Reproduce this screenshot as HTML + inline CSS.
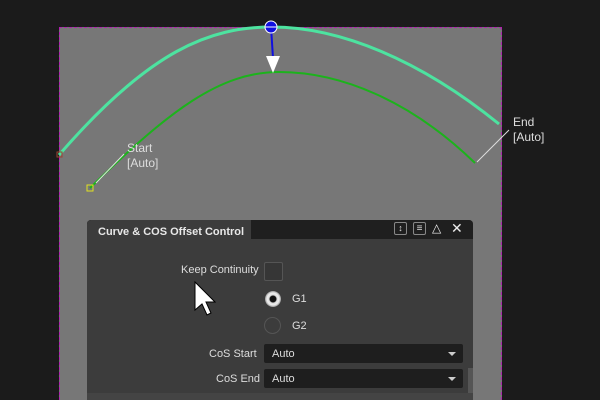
<!DOCTYPE html>
<html><head><style>
body{margin:0;width:600px;height:400px;background:#1b1b1b;position:relative;overflow:hidden;font-family:"Liberation Sans",sans-serif}
.a{position:absolute}
.t{color:#ddd;font-size:11px}
</style></head><body>
<div class="a" style="left:59px;top:27px;width:443px;height:373px;background:#777;border-top:1px dashed #b020b0;border-left:1px dashed #b020b0;border-right:1px dashed #b020b0;box-sizing:border-box"></div>
<svg class="a" style="left:0;top:0" width="600" height="400">
<path d="M59 155 C150 50 210 27 272 27 C340 27 420 60 499 124" stroke="#4de3a0" stroke-width="3" fill="none"/>
<path d="M90 188 C170 110 220 72 279 72 C340 72 410 100 475 163" stroke="#1cb31c" stroke-width="2" fill="none"/>
<rect x="57" y="152" width="5" height="5" fill="none" stroke="#a04030"/>
<rect x="87" y="185" width="6" height="6" fill="none" stroke="#e0e020"/>
<line x1="96" y1="183" x2="124" y2="154" stroke="#ddd"/>
<line x1="477" y1="162" x2="509" y2="130" stroke="#ddd"/>
<line x1="271" y1="27" x2="273" y2="58" stroke="#1010e0" stroke-width="2"/>
<circle cx="271" cy="27" r="6" fill="#1010e0" stroke="#fff" stroke-width="1"/>
<line x1="265" y1="27" x2="277" y2="27" stroke="#fff" stroke-width="1"/>
<polygon points="266,56 280,56 273,73" fill="#fff"/>
</svg>
<div class="a t" style="left:127px;top:141px;line-height:15px;font-size:12px">Start<br>[Auto]</div>
<div class="a t" style="left:513px;top:115px;line-height:15px;font-size:12px">End<br>[Auto]</div>
<div class="a" style="left:87px;top:220px;width:386px;height:180px;background:#3c3c3c;border-radius:4px 4px 0 0;overflow:hidden">
<div class="a" style="left:0;top:0;width:386px;height:19px;background:#1f1f1f"></div>
<div class="a" style="left:0;top:0;width:164px;height:19px;background:#3c3c3c;border-radius:4px 0 0 0"></div>
<div class="a t" style="left:11px;top:6px;font-weight:bold;color:#e8e8e8">Curve &amp; COS Offset Control</div>
<div class="a" style="left:307px;top:2px;width:11px;height:11px;border:1px solid #888;border-radius:2px;color:#ddd;font-size:9px;text-align:center;line-height:11px">↕</div>
<div class="a" style="left:326px;top:2px;width:11px;height:11px;border:1px solid #888;border-radius:2px;color:#ddd;font-size:10px;text-align:center;line-height:11px">≡</div>
<div class="a" style="left:345px;top:1px;color:#eee;font-size:12px">△</div>
<div class="a" style="left:364px;top:0px;color:#eee;font-size:14px">✕</div>
<div class="a t" style="left:94px;top:44px">Keep Continuity</div>
<div class="a" style="left:177px;top:42px;width:17px;height:17px;border:1px solid #555;border-radius:2px;background:#363636"></div>
<div class="a" style="left:178px;top:71px;width:16px;height:16px;border-radius:50%;background:radial-gradient(circle,#111 0,#111 3px,#ddd 4px,#eee 6px,#999 8px)"></div>
<div class="a t" style="left:205px;top:73px">G1</div>
<div class="a" style="left:177px;top:97px;width:15px;height:15px;border-radius:50%;border:1px solid #555"></div>
<div class="a t" style="left:205px;top:100px">G2</div>
<div class="a t" style="left:122px;top:128px">CoS Start</div>
<div class="a" style="left:177px;top:124px;width:199px;height:19px;background:#1e1e1e;border-radius:2px"></div>
<div class="a t" style="left:185px;top:128px">Auto</div>
<div class="a" style="left:361px;top:132px;width:0;height:0;border-left:4px solid transparent;border-right:4px solid transparent;border-top:4px solid #ccc"></div>
<div class="a t" style="left:129px;top:153px">CoS End</div>
<div class="a" style="left:177px;top:149px;width:199px;height:19px;background:#1e1e1e;border-radius:2px"></div>
<div class="a t" style="left:185px;top:153px">Auto</div>
<div class="a" style="left:361px;top:157px;width:0;height:0;border-left:4px solid transparent;border-right:4px solid transparent;border-top:4px solid #ccc"></div>
<div class="a" style="left:381px;top:148px;width:5px;height:25px;background:#555"></div>
<div class="a" style="left:0;top:173px;width:386px;height:7px;background:#444"></div>
</div>
<svg class="a" style="left:193px;top:280px" width="24" height="40"><path d="M2 2 L2 30 L9 24 L14 35 L18 33 L13 22 L22 22 Z" fill="#fff" stroke="#000" stroke-width="1"/></svg>
</body></html>
